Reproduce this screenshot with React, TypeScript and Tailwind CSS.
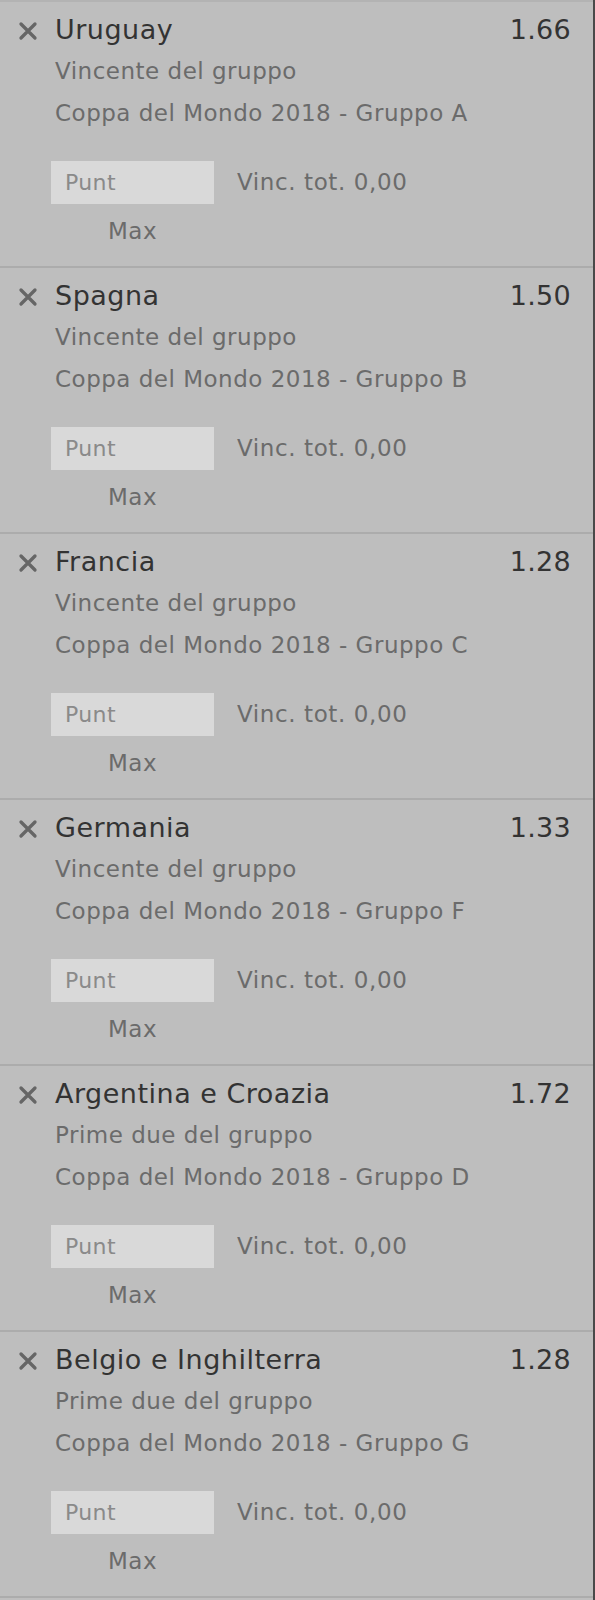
const bets = [
  { title: 'Uruguay', odds: '1.66', market: 'Vincente del gruppo', event: 'Coppa del Mondo 2018 - Gruppo A' },
  { title: 'Spagna', odds: '1.50', market: 'Vincente del gruppo', event: 'Coppa del Mondo 2018 - Gruppo B' },
  { title: 'Francia', odds: '1.28', market: 'Vincente del gruppo', event: 'Coppa del Mondo 2018 - Gruppo C' },
  { title: 'Germania', odds: '1.33', market: 'Vincente del gruppo', event: 'Coppa del Mondo 2018 - Gruppo F' },
  { title: 'Argentina e Croazia', odds: '1.72', market: 'Prime due del gruppo', event: 'Coppa del Mondo 2018 - Gruppo D' },
  { title: 'Belgio e Inghilterra', odds: '1.28', market: 'Prime due del gruppo', event: 'Coppa del Mondo 2018 - Gruppo G' },
]

function CloseIcon() {
  return (
    <svg width="22" height="22" viewBox="0 0 22 22" className="text-[#666]">
      <path d="M4 4 L18 18 M18 4 L4 18" stroke="currentColor" strokeWidth="3.3" strokeLinecap="round" />
    </svg>
  )
}

function BetCard({ title, odds, market, event }: (typeof bets)[number]) {
  return (
    <div className="h-[266px] border-b-2 border-[#acacac] pt-[12px]">
      {/* header */}
      <div className="flex items-center h-[32px] pr-[22px]">
        <div className="w-[55px] flex justify-center pt-[1px]">
          <CloseIcon />
        </div>
        <div className="flex-1 text-[27px] tracking-[0.5px] text-[#333]">{title}</div>
        <div className="text-[27px] tracking-[0.3px] text-[#333]">{odds}</div>
      </div>

      <div className="mt-[4px] pl-[55px] text-[23px] tracking-[0.5px] text-[#6b6b6b] leading-[42px]">
        <div>{market}</div>
        <div>{event}</div>
      </div>

      {/* stake */}
      <div className="pl-[51px] mt-[27px] flex items-center">
        <div className="w-[163px] h-[43px] bg-[#d9d9d9] pl-[14px] flex items-center text-[22px] tracking-[0.4px] text-[#8a8a8a]">
          Punt
        </div>
        <div className="ml-[23px] text-[23px] tracking-[0.6px] text-[#6b6b6b]">Vinc. tot. 0,00</div>
      </div>
      <div className="pl-[51px] mt-[12px]">
        <div className="w-[163px] text-center text-[23px] tracking-[0.5px] leading-[30px] text-[#6b6b6b]">Max</div>
      </div>
    </div>
  )
}

export default function App() {
  return (
    <div className="min-h-[1600px] bg-[#bebebe] flex" style={{ fontFamily: '"DejaVu Sans", Verdana, sans-serif' }}>
      <div className="w-[593px] border-t-2 border-[#b3b3b3]">
        {bets.map((b) => (
          <BetCard key={b.title + b.event} {...b} />
        ))}
      </div>
      <div className="w-[2px] bg-[#4a4a4a]" />
    </div>
  )
}
